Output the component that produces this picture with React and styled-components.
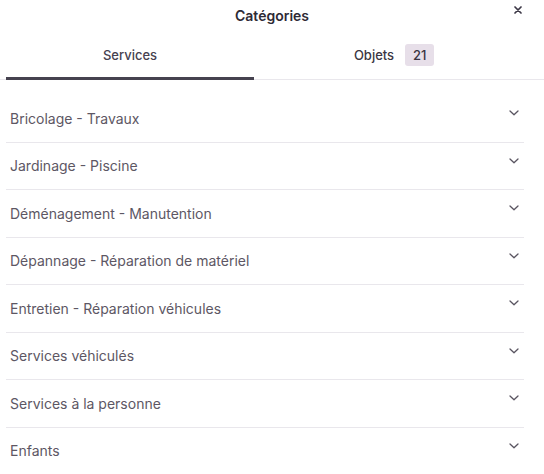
import * as React from 'react'
import styled, { createGlobalStyle } from 'styled-components'

const categories = [
  'Bricolage - Travaux',
  'Jardinage - Piscine',
  'Déménagement - Manutention',
  'Dépannage - Réparation de matériel',
  'Entretien - Réparation véhicules',
  'Services véhiculés',
  'Services à la personne',
  'Enfants',
]

export default function App() {
  return (
    <>
      <GlobalStyle />
      <Panel>
        <Header>
          <span />
          <Title>Catégories</Title>
          <CloseButton aria-label="Fermer">
            <svg width="8" height="8" viewBox="0 0 8 8">
              <path d="M1 1L7 7M7 1L1 7" stroke="#3d3847" strokeWidth="1.7" strokeLinecap="round" />
            </svg>
          </CloseButton>
        </Header>

        <Tabs>
          <Tab active>Services</Tab>
          <Tab grow>
            Objets
            <Badge>21</Badge>
          </Tab>
        </Tabs>

        <List>
          {categories.map(name => (
            <Row key={name}>
              <RowLabel>{name}</RowLabel>
              <Chevron width="10" height="6" viewBox="0 0 10 6">
                <path d="M1 1L5 4.8L9 1" fill="none" stroke="#5a5561" strokeWidth="1.3" strokeLinecap="round" strokeLinejoin="round" />
              </Chevron>
            </Row>
          ))}
        </List>
      </Panel>
    </>
  )
}

// Styles
const GlobalStyle = createGlobalStyle`
  body {
    margin: 0;
    background: #fff;
    font-family: Inter, "Noto Sans", sans-serif;
  }
`

const Panel = styled.div`
  width: 544px;
  height: 474px;
  overflow: hidden;
  background: #fff;
`

const Header = styled.div`
  height: 32px;
  display: grid;
  grid-template-columns: 1fr auto 1fr;
  align-items: center;
`

const Title = styled.div`
  font-size: 14px;
  font-weight: 600;
  color: #2e2a35;
  margin-top: -2px;
`

const CloseButton = styled.button`
  justify-self: end;
  align-self: start;
  margin: 6px 22px 0 0;
  width: 8px;
  height: 8px;
  padding: 0;
  border: 0;
  background: none;
  display: flex;
  cursor: pointer;
`

const Tabs = styled.div`
  height: 47px;
  display: flex;
  border-bottom: 1px solid #e9e7ec;
`

const Tab = styled.div`
  ${p => (p.grow ? 'flex: 1; margin-right: 10px;' : 'width: 248px; margin-left: 6px;')}
  display: flex;
  align-items: center;
  justify-content: center;
  gap: 11px;
  margin-bottom: -1px;
  font-size: 13px;
  font-weight: 500;
  color: ${p => (p.active ? '#46414f' : '#3a3542')};
  border-bottom: 3px solid ${p => (p.active ? '#46424f' : 'transparent')};
  box-sizing: border-box;
`

const Badge = styled.span`
  display: inline-flex;
  align-items: center;
  justify-content: center;
  width: 29px;
  height: 22px;
  border-radius: 3px;
  background: #e7dfe9;
  color: #3a3542;
  font-size: 13px;
`

const List = styled.div`
  padding: 15px 20px 0 6px;
`

const Row = styled.div`
  height: 47.5px;
  display: flex;
  justify-content: space-between;
  align-items: center;
  padding-left: 4px;
  border-bottom: 1px solid #e9e7ec;
  box-sizing: border-box;
`

const RowLabel = styled.div`
  font-size: 14px;
  color: #5d5764;
`

const Chevron = styled.svg`
  align-self: flex-start;
  margin: 15px 5px 0 0;
`
